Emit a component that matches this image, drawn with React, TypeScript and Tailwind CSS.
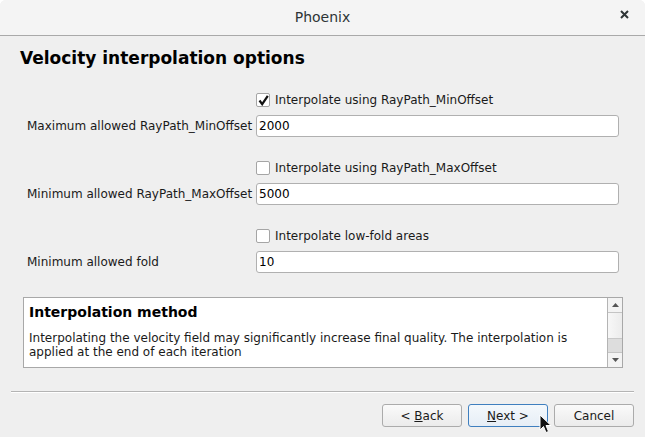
import React from "react";

function Checkbox({ checked }: { checked?: boolean }) {
  return (
    <div className="w-[14px] h-[14px] bg-white border border-[#a5a5a5] rounded-[2px] flex items-center justify-center">
      {checked && (
        <svg width="11" height="11" viewBox="0 0 11 11">
          <path d="M1.5 5.5 L4.2 9.2 L9.8 0.8" fill="none" stroke="#111" strokeWidth="2.2" />
        </svg>
      )}
    </div>
  );
}

function Field({ value }: { value: string }) {
  return (
    <div className="h-[22px] w-[363px] bg-white border border-[#b0b0b0] rounded-[3px] flex items-center pl-[2px] text-[12px] text-black">
      {value}
    </div>
  );
}

function Group({ cb, checked, label, value }: { cb: string; checked?: boolean; label: string; value: string }) {
  return (
    <div className="flex flex-col">
      <div className="h-[20px] flex items-center pl-[256px] gap-[5px]">
        <Checkbox checked={checked} />
        <span className="text-[12px] text-[#1a1a1a]">{cb}</span>
      </div>
      <div className="mt-[5px] flex items-center">
        <div className="w-[256px] pl-[27px] text-[12px] text-[#1a1a1a] whitespace-nowrap">{label}</div>
        <Field value={value} />
      </div>
    </div>
  );
}

function Btn({ children, focused }: { children: React.ReactNode; focused?: boolean }) {
  return (
    <div
      className={
        "w-[80px] h-[23px] rounded-[3px] flex items-center justify-center text-[12px] text-[#1a1a1a] border whitespace-pre " +
        (focused
          ? "border-[#3f7fbf] bg-gradient-to-b from-[#f4f8fc] to-[#e6eef6]"
          : "border-[#ababab] bg-gradient-to-b from-[#fafafa] to-[#ebebeb]")
      }
    >
      {children}
    </div>
  );
}

export default function App() {
  return (
    <div
      className="w-[645px] h-[437px] bg-white overflow-hidden relative"
      style={{ fontFamily: '"DejaVu Sans", sans-serif' }}
    >
      <div className="w-full h-full rounded-t-[6px] overflow-hidden bg-[#efefef] flex flex-col">
        {/* title bar */}
        <div className="h-[36px] shrink-0 bg-[#f4f4f4] border-b border-[#a9a9a9] relative flex items-center justify-center">
          <span className="text-[14px] text-[#2e3436]">Phoenix</span>
          <span className="absolute right-[16px] top-[10px]">
            <svg width="9" height="9" viewBox="0 0 9 9">
              <path d="M1 1 L8 8 M8 1 L1 8" stroke="#2e3436" strokeWidth="2" />
            </svg>
          </span>
        </div>

        {/* heading */}
        <div className="pl-[20px] pt-[10px] h-[54px] shrink-0">
          <div className="text-[17px] font-bold text-black leading-[24px]">Velocity interpolation options</div>
        </div>

        {/* form */}
        <div className="flex flex-col gap-[21px]">
          <Group cb="Interpolate using RayPath_MinOffset" checked label="Maximum allowed RayPath_MinOffset" value="2000" />
          <Group cb="Interpolate using RayPath_MaxOffset" label="Minimum allowed RayPath_MaxOffset" value="5000" />
          <Group cb="Interpolate low-fold areas" label="Minimum allowed fold" value="10" />
        </div>

        {/* info box */}
        <div className="mt-[24px] ml-[23px] w-[600px] h-[71px] bg-white border border-[#a8a8a8] flex">
          <div className="flex-1 pl-[5px] pt-[4px]">
            <div className="text-[14px] font-bold text-black leading-[20px]">Interpolation method</div>
            <div className="mt-[9px] text-[12px] text-[#1a1a1a] leading-[14px]">
              Interpolating the velocity field may significantly increase final quality. The interpolation is
              <br />
              applied at the end of each iteration
            </div>
          </div>
          <div className="w-[15px] border-l border-[#b4b4b4] flex flex-col">
            <div className="h-[15px] border-b border-[#c4c4c4] bg-[#f3f3f3] flex items-center justify-center">
              <svg width="7" height="4" viewBox="0 0 7 4"><path d="M0 4 L3.5 0 L7 4 Z" fill="#555" /></svg>
            </div>
            <div className="flex-1 bg-gradient-to-r from-[#f7f7f7] to-[#ececec]" />
            <div className="h-[14px] bg-[#dddddd] border-t border-[#c8c8c8]" />
            <div className="h-[15px] border-t border-[#c4c4c4] bg-[#f3f3f3] flex items-center justify-center">
              <svg width="7" height="4" viewBox="0 0 7 4"><path d="M0 0 L3.5 4 L7 0 Z" fill="#555" /></svg>
            </div>
          </div>
        </div>

        {/* separator */}
        <div className="mt-[23px] ml-[11px] w-[623px] h-[2px] border-t border-[#b4b4b4] border-b border-b-white" />

        {/* buttons */}
        <div className="mt-[11px] flex justify-end gap-[6px] pr-[11px]">
          <Btn>
            {"< "}<span className="underline">B</span>ack
          </Btn>
          <Btn focused>
            <span className="underline">N</span>{"ext >"}
          </Btn>
          <Btn>Cancel</Btn>
        </div>
      </div>

      {/* mouse cursor */}
      <svg className="absolute left-[539px] top-[414px]" width="14" height="21" viewBox="0 0 14 21">
        <path d="M1 1 L1 16 L4.5 12.5 L7 18.5 L9.5 17.5 L7 11.5 L12 11.5 Z" fill="#111" stroke="#fff" strokeWidth="1" />
      </svg>
    </div>
  );
}
